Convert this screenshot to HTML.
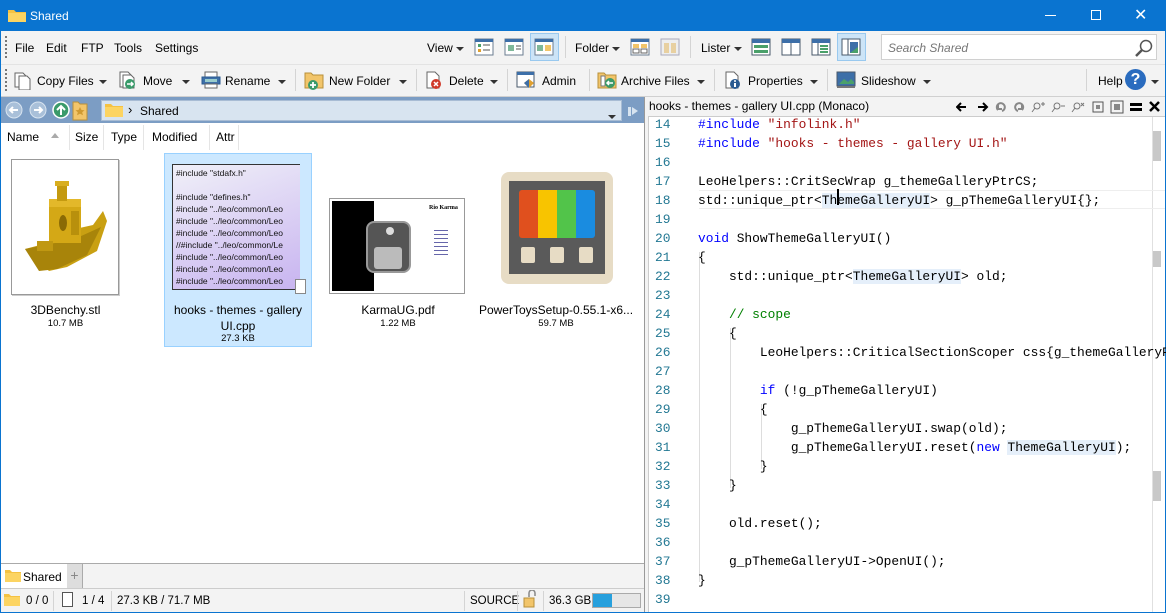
<!DOCTYPE html>
<html><head><meta charset="utf-8">
<style>
*{box-sizing:border-box;margin:0;padding:0}
body{width:1166px;height:613px;overflow:hidden;font-family:"Liberation Sans",sans-serif;font-size:12px;color:#000;background:#0a74d0;position:relative}
.abs{position:absolute}
#title{left:0;top:0;width:1166px;height:31px;background:#0a74d0;color:#fff;font-size:12px}
#main{left:1px;top:31px;width:1164px;height:581px;background:#f3f3f3}
.t{position:absolute;white-space:nowrap}
.sep{position:absolute;width:1px;background:#d4d4d4}
.dd{display:inline-block;width:0;height:0;border-left:4px solid transparent;border-right:4px solid transparent;border-top:4px solid #333;vertical-align:middle}
.ic{position:absolute;width:20px;height:20px}
.code{font-family:"Liberation Mono",monospace;font-size:12.9px;white-space:pre;position:absolute;left:698px;line-height:19px}
.ln{font-family:"Liberation Mono",monospace;font-size:12.9px;position:absolute;left:655px;color:#237893;line-height:19px}
.kw{color:#0000ff}.st{color:#a31515}.cm{color:#008000}.pp{color:#0000ff}
.hl{background:#e5effa}
.st2{font-size:11.5px}
</style></head><body>
<div id="title" class="abs">
 <svg class="abs" style="left:8px;top:8px" width="18" height="14"><path d="M0 2h6l2 2h10v10H0z" fill="#f5c242"/><path d="M0 5h18v9H0z" fill="#fcd462"/></svg>
 <div class="t" style="left:30px;top:9px">Shared</div>
 <div class="t" style="left:1045px;top:15px;width:11px;height:1px;background:#fff"></div>
 <div class="t" style="left:1091px;top:10px;width:10px;height:10px;border:1px solid #fff"></div>
 <div class="t" style="left:1134px;top:5px;font-size:16px">✕</div>
</div>
<div id="main" class="abs">
 <div class="t" style="left:4px;top:5px;width:2px;height:22px;border-left:2px dotted #777"></div>
 <div class="t" style="left:14px;top:10px">File</div>
 <div class="t" style="left:45px;top:10px">Edit</div>
 <div class="t" style="left:80px;top:10px">FTP</div>
 <div class="t" style="left:113px;top:10px">Tools</div>
 <div class="t" style="left:154px;top:10px">Settings</div>
 <div class="t" style="left:426px;top:10px">View <span class="dd"></span></div>
 <svg class="ic" style="left:473px;top:6px"><rect x="1" y="2" width="18" height="16" fill="#fff" stroke="#6b7d90"/><rect x="1" y="2" width="18" height="3" fill="#3d6fa8"/><rect x="4" y="7" width="3" height="3" fill="#4aa06a"/><rect x="4" y="12" width="3" height="3" fill="#e0a030"/><path d="M9 8h7M9 13h7" stroke="#555"/></svg>
 <svg class="ic" style="left:503px;top:6px"><rect x="1" y="2" width="18" height="16" fill="#fff" stroke="#6b7d90"/><rect x="1" y="2" width="18" height="3" fill="#3d6fa8"/><rect x="4" y="8" width="6" height="6" fill="#7fb89a"/><path d="M12 9h5M12 12h5" stroke="#555"/></svg>
 <div class="t" style="left:529px;top:2px;width:29px;height:28px;background:#cce4f7;border:1px solid #99c9ef"></div>
 <svg class="ic" style="left:533px;top:6px"><rect x="1" y="2" width="18" height="16" fill="#fff" stroke="#6b7d90"/><rect x="1" y="2" width="18" height="3" fill="#3d6fa8"/><rect x="3" y="8" width="6" height="6" fill="#7fb89a"/><rect x="11" y="8" width="6" height="6" fill="#f2c56a"/></svg>
 <div class="sep" style="left:564px;top:5px;height:22px"></div>
 <div class="t" style="left:574px;top:10px">Folder <span class="dd"></span></div>
 <svg class="ic" style="left:629px;top:6px"><rect x="1" y="2" width="18" height="16" fill="#fff" stroke="#6b7d90"/><rect x="1" y="2" width="18" height="3" fill="#3d6fa8"/><rect x="3" y="7" width="6" height="4" fill="#f2c56a"/><rect x="11" y="7" width="6" height="4" fill="#f2c56a"/><rect x="3" y="12" width="6" height="4" fill="none" stroke="#666"/><rect x="11" y="12" width="6" height="4" fill="none" stroke="#666"/></svg>
 <svg class="ic" style="left:659px;top:6px"><rect x="1" y="2" width="18" height="16" fill="#eee" stroke="#aab"/><rect x="4" y="6" width="5" height="10" fill="#e8d0a0"/><rect x="11" y="6" width="5" height="10" fill="#e8d0a0"/></svg>
 <div class="sep" style="left:689px;top:5px;height:22px"></div>
 <div class="t" style="left:700px;top:10px">Lister <span class="dd"></span></div>
 <svg class="ic" style="left:750px;top:6px"><rect x="1" y="2" width="18" height="16" fill="#fff" stroke="#4a5a6b"/><rect x="1" y="2" width="18" height="4" fill="#3d6fa8"/><rect x="3" y="8" width="14" height="3" fill="#4aa06a"/><rect x="3" y="13" width="14" height="3" fill="#4aa06a"/></svg>
 <svg class="ic" style="left:780px;top:6px"><rect x="1" y="2" width="18" height="16" fill="#fff" stroke="#4a5a6b"/><rect x="1" y="2" width="18" height="4" fill="#3d6fa8"/><path d="M10 6v12" stroke="#4a5a6b"/></svg>
 <svg class="ic" style="left:810px;top:6px"><rect x="1" y="2" width="18" height="16" fill="#fff" stroke="#4a5a6b"/><rect x="1" y="2" width="18" height="4" fill="#3d6fa8"/><path d="M7 6v12" stroke="#4a5a6b"/><path d="M9 9h8M9 12h8M9 15h8" stroke="#4aa06a" stroke-width="2"/></svg>
 <div class="t" style="left:836px;top:2px;width:29px;height:28px;background:#cce4f7;border:1px solid #99c9ef"></div>
 <svg class="ic" style="left:840px;top:6px"><rect x="1" y="2" width="18" height="16" fill="#fff" stroke="#4a5a6b"/><path d="M7 2v16" stroke="#4a5a6b"/><path d="M9 5h8v11H9z" fill="#3d6fa8"/><path d="M9 16l8-6v6z" fill="#4aa06a"/></svg>
 <div class="t" style="left:880px;top:3px;width:276px;height:26px;background:#fff;border:1px solid #d0d0d0"></div>
 <div class="t" style="left:887px;top:10px;color:#777;font-style:italic">Search Shared</div>
 <svg class="abs" style="left:1133px;top:7px" width="20" height="20"><circle cx="12" cy="8" r="5.5" fill="none" stroke="#555" stroke-width="1.5"/><path d="M8 12l-6 6" stroke="#555" stroke-width="2.5"/></svg>
 <div class="t" style="left:0;top:33px;width:1164px;height:1px;background:#e3e3e3"></div>
 <div class="t" style="left:4px;top:38px;width:2px;height:22px;border-left:2px dotted #777"></div>
 <svg class="ic" style="left:11px;top:39px"><path d="M3 3h8l3 3v11H3z" fill="#fff" stroke="#666"/><path d="M7 6h8l3 3v11H7z" fill="#fff" stroke="#666"/></svg>
 <div class="t" style="left:36px;top:43px">Copy Files</div><div class="t" style="left:98px;top:43px"><span class="dd"></span></div>
 <svg class="ic" style="left:117px;top:39px"><path d="M2 2h8l3 3v12H2z" fill="#fff" stroke="#666"/><path d="M5 5h8l3 3v10H5z" fill="#fff" stroke="#666"/><circle cx="12" cy="14" r="5" fill="#3a9a6a"/><path d="M9 14h6M13 12l2 2-2 2" stroke="#fff" stroke-width="1.5" fill="none"/></svg>
 <div class="t" style="left:142px;top:43px">Move</div><div class="t" style="left:181px;top:43px"><span class="dd"></span></div>
 <svg class="ic" style="left:200px;top:39px"><path d="M4 2h12v5H4z" fill="#fff" stroke="#666"/><rect x="1" y="7" width="18" height="7" fill="#3d6fa8" stroke="#2a5a90"/><rect x="4" y="9" width="12" height="3" fill="#9cc"/><path d="M4 14h12v4H4z" fill="#fff" stroke="#666"/></svg>
 <div class="t" style="left:224px;top:43px">Rename</div><div class="t" style="left:277px;top:43px"><span class="dd"></span></div>
 <div class="sep" style="left:294px;top:38px;height:22px"></div>
 <svg class="ic" style="left:303px;top:39px"><path d="M1 3h6l2 2h10v13H1z" fill="#f2c56a" stroke="#b8903a"/><circle cx="9" cy="15" r="5" fill="#3a9a6a"/><path d="M6 15h6M9 12v6" stroke="#fff" stroke-width="1.8"/></svg>
 <div class="t" style="left:328px;top:43px">New Folder</div><div class="t" style="left:398px;top:43px"><span class="dd"></span></div>
 <div class="sep" style="left:415px;top:38px;height:22px"></div>
 <svg class="ic" style="left:423px;top:39px"><path d="M3 2h8l4 4v12H3z" fill="#fff" stroke="#666"/><circle cx="12" cy="14" r="5" fill="#d03a2a"/><path d="M10 12l4 4M14 12l-4 4" stroke="#fff" stroke-width="1.5"/></svg>
 <div class="t" style="left:448px;top:43px">Delete</div><div class="t" style="left:489px;top:43px"><span class="dd"></span></div>
 <div class="sep" style="left:506px;top:38px;height:22px"></div>
 <svg class="ic" style="left:515px;top:39px"><rect x="1" y="2" width="17" height="15" fill="#fff" stroke="#4a5a6b"/><rect x="1" y="2" width="17" height="3" fill="#3d6fa8"/><path d="M13 9l5 4-5 5-5-5z" fill="#e0a030"/><path d="M13 9l-5 4 5 5z" fill="#3d6fa8"/></svg>
 <div class="t" style="left:541px;top:43px">Admin</div>
 <div class="sep" style="left:588px;top:38px;height:22px"></div>
 <svg class="ic" style="left:596px;top:39px"><path d="M1 3h6l2 2h10v13H1z" fill="#f2c56a" stroke="#b8903a"/><rect x="4" y="6" width="4" height="10" fill="#fff" stroke="#777"/><circle cx="13" cy="13" r="5" fill="#3a9a6a"/><path d="M16 13h-6M12 11l-2 2 2 2" stroke="#fff" stroke-width="1.5" fill="none"/></svg>
 <div class="t" style="left:620px;top:43px">Archive Files</div><div class="t" style="left:696px;top:43px"><span class="dd"></span></div>
 <div class="sep" style="left:713px;top:38px;height:22px"></div>
 <svg class="ic" style="left:722px;top:39px"><path d="M3 2h8l4 4v12H3z" fill="#fff" stroke="#666"/><circle cx="12" cy="14" r="5" fill="#2a5a90"/><path d="M12 13v4" stroke="#fff" stroke-width="2"/><circle cx="12" cy="11" r="1" fill="#fff"/></svg>
 <div class="t" style="left:747px;top:43px">Properties</div><div class="t" style="left:809px;top:43px"><span class="dd"></span></div>
 <div class="sep" style="left:826px;top:38px;height:22px"></div>
 <svg class="ic" style="left:835px;top:39px"><rect x="1" y="2" width="18" height="14" fill="#3d6fa8" stroke="#4a5a6b"/><path d="M3 14l5-5 4 3 3-3 3 3v2H3z" fill="#4aa06a"/><rect x="1" y="16" width="18" height="2" fill="#777"/></svg>
 <div class="t" style="left:860px;top:43px">Slideshow</div><div class="t" style="left:922px;top:43px"><span class="dd"></span></div>
 <div class="sep" style="left:1085px;top:38px;height:22px"></div>
 <div class="t" style="left:1097px;top:43px">Help</div>
 <div class="t" style="left:1124px;top:38px;width:21px;height:21px;border-radius:50%;background:#2a6cbf;color:#fff;font-weight:bold;font-size:16px;text-align:center;line-height:21px">?</div>
 <div class="t" style="left:1150px;top:43px"><span class="dd"></span></div>
 <div class="t" style="left:0;top:65px;width:1164px;height:1px;background:#d0d0d0"></div>

 <div class="t" style="left:0;top:66px;width:643px;height:26px;background:#7c9dc4"></div>
 <svg class="abs" style="left:3px;top:69px" width="96" height="22">
  <circle cx="10" cy="10" r="8" fill="#a9c0d9" stroke="#d8e4f0"/><path d="M14 10H6M9 7l-3 3 3 3" stroke="#fff" stroke-width="2" fill="none"/>
  <circle cx="34" cy="10" r="8" fill="#a9c0d9" stroke="#d8e4f0"/><path d="M30 10h8M35 7l3 3-3 3" stroke="#fff" stroke-width="2" fill="none"/>
  <circle cx="57" cy="10" r="8" fill="#3a9a6a" stroke="#fff" stroke-width="1.5"/><path d="M57 15V6M53 10l4-4 4 4" stroke="#fff" stroke-width="2" fill="none"/>
  <path d="M69 2h5l2 2h7v16H69z" fill="#f2c56a" stroke="#b8903a"/><path d="M76 7l1.5 3 3 .3-2.3 2 .8 3-3-1.6-3 1.6.8-3-2.3-2 3-.3z" fill="#d09a30"/>
 </svg>
 <div class="t" style="left:100px;top:69px;width:521px;height:21px;background:#d8e4f0;border:1px solid #a8bcd4"></div>
 <svg class="abs" style="left:104px;top:72px" width="18" height="14"><path d="M0 1h6l2 2h10v11H0z" fill="#f5c242"/><path d="M0 4h18v10H0z" fill="#fcd462"/></svg>
 <div class="t" style="left:127px;top:71px;font-size:13px">›</div>
 <div class="t" style="left:139px;top:73px">Shared</div>
 <div class="t" style="left:607px;top:78px"><span class="dd"></span></div>
 <div class="t" style="left:627px;top:76px;width:3px;height:9px;background:#d8e4f0"></div>
 <div class="t" style="left:631px;top:76px;width:0;height:0;border-top:4.5px solid transparent;border-bottom:4.5px solid transparent;border-left:6px solid #d8e4f0"></div>
 <div class="t" style="left:0;top:92px;width:643px;height:440px;background:#fff"></div>
 <div class="t" style="left:6px;top:99px">Name</div>
 <div class="t" style="left:50px;top:102px;width:0;height:0;border-left:4px solid transparent;border-right:4px solid transparent;border-bottom:5px solid #aaa"></div>
 <div class="sep" style="left:68px;top:94px;height:25px;background:#e5e5e5"></div>
 <div class="t" style="left:74px;top:99px">Size</div>
 <div class="sep" style="left:102px;top:94px;height:25px;background:#e5e5e5"></div>
 <div class="t" style="left:110px;top:99px">Type</div>
 <div class="sep" style="left:142px;top:94px;height:25px;background:#e5e5e5"></div>
 <div class="t" style="left:151px;top:99px">Modified</div>
 <div class="sep" style="left:208px;top:94px;height:25px;background:#e5e5e5"></div>
 <div class="t" style="left:215px;top:99px">Attr</div>
 <div class="sep" style="left:237px;top:94px;height:25px;background:#e5e5e5"></div>

 <!-- file 1 -->
 <div class="t" style="left:10px;top:128px;width:108px;height:136px;border:1px solid #999;background:#fff;box-shadow:1px 1px 0 #ccc"></div>
 <svg class="abs" style="left:22px;top:148px" width="88" height="100">
  <path d="M2 70l30-8 20 -12 18 -4 10-14 4 10-10 30-30 16-18 4z" fill="#c9a012"/>
  <path d="M2 70l14 22 18-2 30-14 14-28-22 10-24 6z" fill="#a8840a"/>
  <rect x="26" y="20" width="32" height="44" fill="#d4a816"/><rect x="26" y="20" width="32" height="8" fill="#e3b82a"/>
  <rect x="34" y="4" width="10" height="18" fill="#c49a10"/><rect x="32" y="2" width="14" height="5" fill="#d8ae20"/>
  <circle cx="70" cy="38" r="3" fill="#fff"/><ellipse cx="40" cy="44" rx="4" ry="8" fill="#8a6a05"/><rect x="48" y="32" width="8" height="24" fill="#b8900c"/>
  <rect x="14" y="62" width="16" height="10" fill="#c09812"/>
 </svg>
 <div class="t" style="left:0;top:272px;width:129px;text-align:center">3DBenchy.stl</div>
 <div class="t" style="left:0;top:287px;width:129px;text-align:center;font-size:9.5px">10.7 MB</div>
 <!-- file 2 selected -->
 <div class="t" style="left:163px;top:122px;width:148px;height:194px;background:#cce8ff;border:1px solid #99d1ff"></div>
 <div class="t" style="left:171px;top:133px;width:128px;height:126px;background:linear-gradient(160deg,#f0f0f8,#c8b4f0);border:1px solid #333;border-right:none;font-size:8.5px;line-height:12px;padding:2px 3px;overflow:hidden;color:#111">#include "stdafx.h"<br><br>#include "defines.h"<br>#include "../leo/common/Leo<br>#include "../leo/common/Leo<br>#include "../leo/common/Leo<br>//#include "../leo/common/Le<br>#include "../leo/common/Leo<br>#include "../leo/common/Leo<br>#include "../leo/common/Leo</div>
 <div class="t" style="left:294px;top:248px;width:11px;height:15px;background:#fff;border:1px solid #888"></div>
 <div class="t" style="left:163px;top:271px;width:148px;text-align:center;line-height:16px">hooks - themes - gallery<br>UI.cpp</div>
 <div class="t" style="left:163px;top:302px;width:148px;text-align:center;font-size:9.5px">27.3 KB</div>
 <!-- file 3 -->
 <div class="t" style="left:328px;top:167px;width:136px;height:96px;border:1px solid #999;background:#fff"></div>
 <div class="t" style="left:331px;top:170px;width:42px;height:90px;background:#000"></div>
 <div class="t" style="left:365px;top:190px;width:45px;height:52px;border-radius:8px;background:#555;border:2px solid #999"></div>
 <div class="t" style="left:373px;top:216px;width:28px;height:22px;background:#bbb;border-radius:3px"></div>
 <div class="t" style="left:385px;top:196px;width:8px;height:8px;border-radius:50%;background:#ddd"></div>
 <div class="t" style="left:428px;top:174px;font-size:6px;font-weight:bold;font-family:'Liberation Serif',serif">Rio Karma</div>
 <div class="t" style="left:433px;top:196px;width:14px;height:30px;border-left:0;background:repeating-linear-gradient(#fff 0 3px,#66a 3px 4px)"></div>
 <div class="t" style="left:328px;top:272px;width:138px;text-align:center">KarmaUG.pdf</div>
 <div class="t" style="left:328px;top:287px;width:138px;text-align:center;font-size:9.5px">1.22 MB</div>
 <!-- file 4 -->
 <div class="t" style="left:500px;top:141px;width:112px;height:112px;border-radius:8px;background:#e7dcc5"></div>
 <div class="t" style="left:508px;top:150px;width:96px;height:93px;background:#5a5a5a"></div>
 <div class="t" style="left:518px;top:159px;width:76px;height:48px;border-radius:3px;background:linear-gradient(90deg,#e0501e 0 25%,#f8c400 25% 50%,#52c44a 50% 75%,#1a8ce0 75%)"></div>
 <div class="t" style="left:520px;top:216px;width:14px;height:16px;background:#e7dcc5;border-radius:2px"></div>
 <div class="t" style="left:549px;top:216px;width:14px;height:16px;background:#e7dcc5;border-radius:2px"></div>
 <div class="t" style="left:578px;top:216px;width:14px;height:16px;background:#e7dcc5;border-radius:2px"></div>
 <div class="t" style="left:477px;top:272px;width:156px;text-align:center">PowerToysSetup-0.55.1-x6...</div>
 <div class="t" style="left:477px;top:287px;width:156px;text-align:center;font-size:9.5px">59.7 MB</div>

 <!-- tab bar -->
 <div class="t" style="left:0;top:532px;width:643px;height:1px;background:#aaa"></div>
 <div class="t" style="left:0;top:533px;width:66px;height:24px;background:#fff"></div>
 <svg class="abs" style="left:4px;top:538px" width="16" height="13"><path d="M0 1h5l2 2h9v10H0z" fill="#f5c242"/><path d="M0 4h16v9H0z" fill="#fcd462"/></svg>
 <div class="t" style="left:22px;top:539px">Shared</div>
 <div class="t" style="left:66px;top:533px;width:16px;height:24px;background:#ddd;border-right:1px solid #aaa;color:#888;text-align:center;font-size:14px;line-height:22px">+</div>
 <div class="t" style="left:0;top:557px;width:643px;height:1px;background:#ccc"></div>
 <!-- status -->
 <svg class="abs" style="left:3px;top:562px" width="16" height="13"><path d="M0 1h5l2 2h9v10H0z" fill="#f5c242"/><path d="M0 4h16v9H0z" fill="#fcd462"/></svg>
 <div class="t st2" style="left:25px;top:564px">0 / 0</div>
 <div class="sep" style="left:52px;top:560px;height:20px"></div>
 <div class="t" style="left:61px;top:561px;width:11px;height:15px;border:1px solid #555;background:#fff"></div>
 <div class="t st2" style="left:81px;top:564px">1 / 4</div>
 <div class="sep" style="left:110px;top:560px;height:20px"></div>
 <div class="t st2" style="left:116px;top:564px">27.3 KB / 71.7 MB</div>
 <div class="sep" style="left:463px;top:560px;height:20px"></div>
 <div class="t st2" style="left:469px;top:564px">SOURCE</div>
 <div class="sep" style="left:516px;top:560px;height:20px"></div>
 <svg class="abs" style="left:522px;top:559px" width="14" height="18"><path d="M6 7V3a3 3 0 0 1 6 0v3" stroke="#888" fill="none" stroke-width="1.5"/><rect x="1" y="8" width="10" height="9" fill="#f2c56a" stroke="#b8903a"/></svg>
 <div class="sep" style="left:542px;top:560px;height:20px"></div>
 <div class="t st2" style="left:548px;top:564px">36.3 GB</div>
 <div class="t" style="left:591px;top:562px;width:49px;height:15px;border:1px solid #aaa;background:#e6e6e6"><div style="width:19px;height:13px;background:#27a0dd"></div></div>

 <div class="t" style="left:643px;top:66px;width:1px;height:515px;background:#999"></div>
 <div class="t" style="left:644px;top:66px;width:520px;height:19px;background:#f3f3f3"></div>
 <div class="t" style="left:648px;top:68px">hooks - themes - gallery UI.cpp (Monaco)</div>
 <svg class="abs" style="left:955px;top:69px" width="208" height="14">
  <path d="M2 7h8M5 3L1 7l4 4" stroke="#000" stroke-width="2" fill="none"/>
  <path d="M22 7h8M27 3l4 4-4 4" stroke="#000" stroke-width="2" fill="none"/>
  <path d="M42 10a4 4 0 1 1 4 1M42 5v4h4" stroke="#888" stroke-width="2" fill="none"/>
  <path d="M66 10a4 4 0 1 0-4 1M66 5v4h-4" stroke="#888" stroke-width="2" fill="none"/>
  <circle cx="81" cy="6" r="3" stroke="#777" fill="none"/><path d="M79 8l-3 4M85 4h4M87 2v4" stroke="#777"/>
  <circle cx="101" cy="6" r="3" stroke="#777" fill="none"/><path d="M99 8l-3 4M105 6h4" stroke="#777"/>
  <circle cx="121" cy="6" r="3" stroke="#777" fill="none"/><path d="M119 8l-3 4M125 3l3 3M128 3l-3 3" stroke="#777"/>
  <rect x="137" y="2" width="10" height="10" fill="none" stroke="#555"/><rect x="140" y="5" width="4" height="4" fill="#888"/>
  <rect x="155" y="1" width="12" height="12" fill="none" stroke="#555"/><rect x="158" y="4" width="6" height="6" fill="#888"/>
  <rect x="174" y="3" width="12" height="3" fill="#000"/><rect x="174" y="8" width="12" height="3" fill="#000"/>
  <path d="M194 2l9 9M203 2l-9 9" stroke="#000" stroke-width="2.5"/>
 </svg>
 <div class="t" style="left:647px;top:85px;width:517px;height:496px;background:#fff;border-left:1px solid #ccc;border-top:1px solid #ccc"></div>
 <div class="t" style="left:1151px;top:86px;width:1px;height:495px;background:#e0e0e0"></div>
 <div class="t" style="left:1152px;top:100px;width:8px;height:30px;background:#c8c8c8"></div>
 <div class="t" style="left:1152px;top:220px;width:8px;height:16px;background:#c8c8c8"></div>
 <div class="t" style="left:1152px;top:440px;width:8px;height:30px;background:#c8c8c8"></div>
 <div class="t" style="left:698px;top:159px;width:466px;height:19px;border-top:1px solid #eee;border-bottom:1px solid #eee"></div>
 <div class="t" style="left:698px;top:221px;width:1px;height:330px;background:#ddd"></div>
 <div class="t" style="left:729px;top:297px;width:1px;height:160px;background:#ddd"></div>
 <div class="t" style="left:760px;top:373px;width:1px;height:65px;background:#ddd"></div>
</div>
<div class="ln" style="top:115px">14<br>15<br>16<br>17<br>18<br>19<br>20<br>21<br>22<br>23<br>24<br>25<br>26<br>27<br>28<br>29<br>30<br>31<br>32<br>33<br>34<br>35<br>36<br>37<br>38<br>39</div>
<div class="code" style="top:115px"><span class="pp">#include</span> <span class="st">"infolink.h"</span>
<span class="pp">#include</span> <span class="st">"hooks - themes - gallery UI.h"</span>

LeoHelpers::CritSecWrap g_themeGalleryPtrCS;
std::unique_ptr&lt;<span class="hl">ThemeGalleryUI</span>&gt; g_pThemeGalleryUI{};

<span class="kw">void</span> ShowThemeGalleryUI()
{
    std::unique_ptr&lt;<span class="hl">ThemeGalleryUI</span>&gt; old;

    <span class="cm">// scope</span>
    {
        LeoHelpers::CriticalSectionScoper css{g_themeGalleryP

        <span class="kw">if</span> (!g_pThemeGalleryUI)
        {
            g_pThemeGalleryUI.swap(old);
            g_pThemeGalleryUI.reset(<span class="kw">new</span> <span class="hl">ThemeGalleryUI</span>);
        }
    }

    old.reset();

    g_pThemeGalleryUI-&gt;OpenUI();
}
</div>
<div class="t" style="left:837px;top:189px;width:2px;height:16px;background:#000"></div>
</body></html>
